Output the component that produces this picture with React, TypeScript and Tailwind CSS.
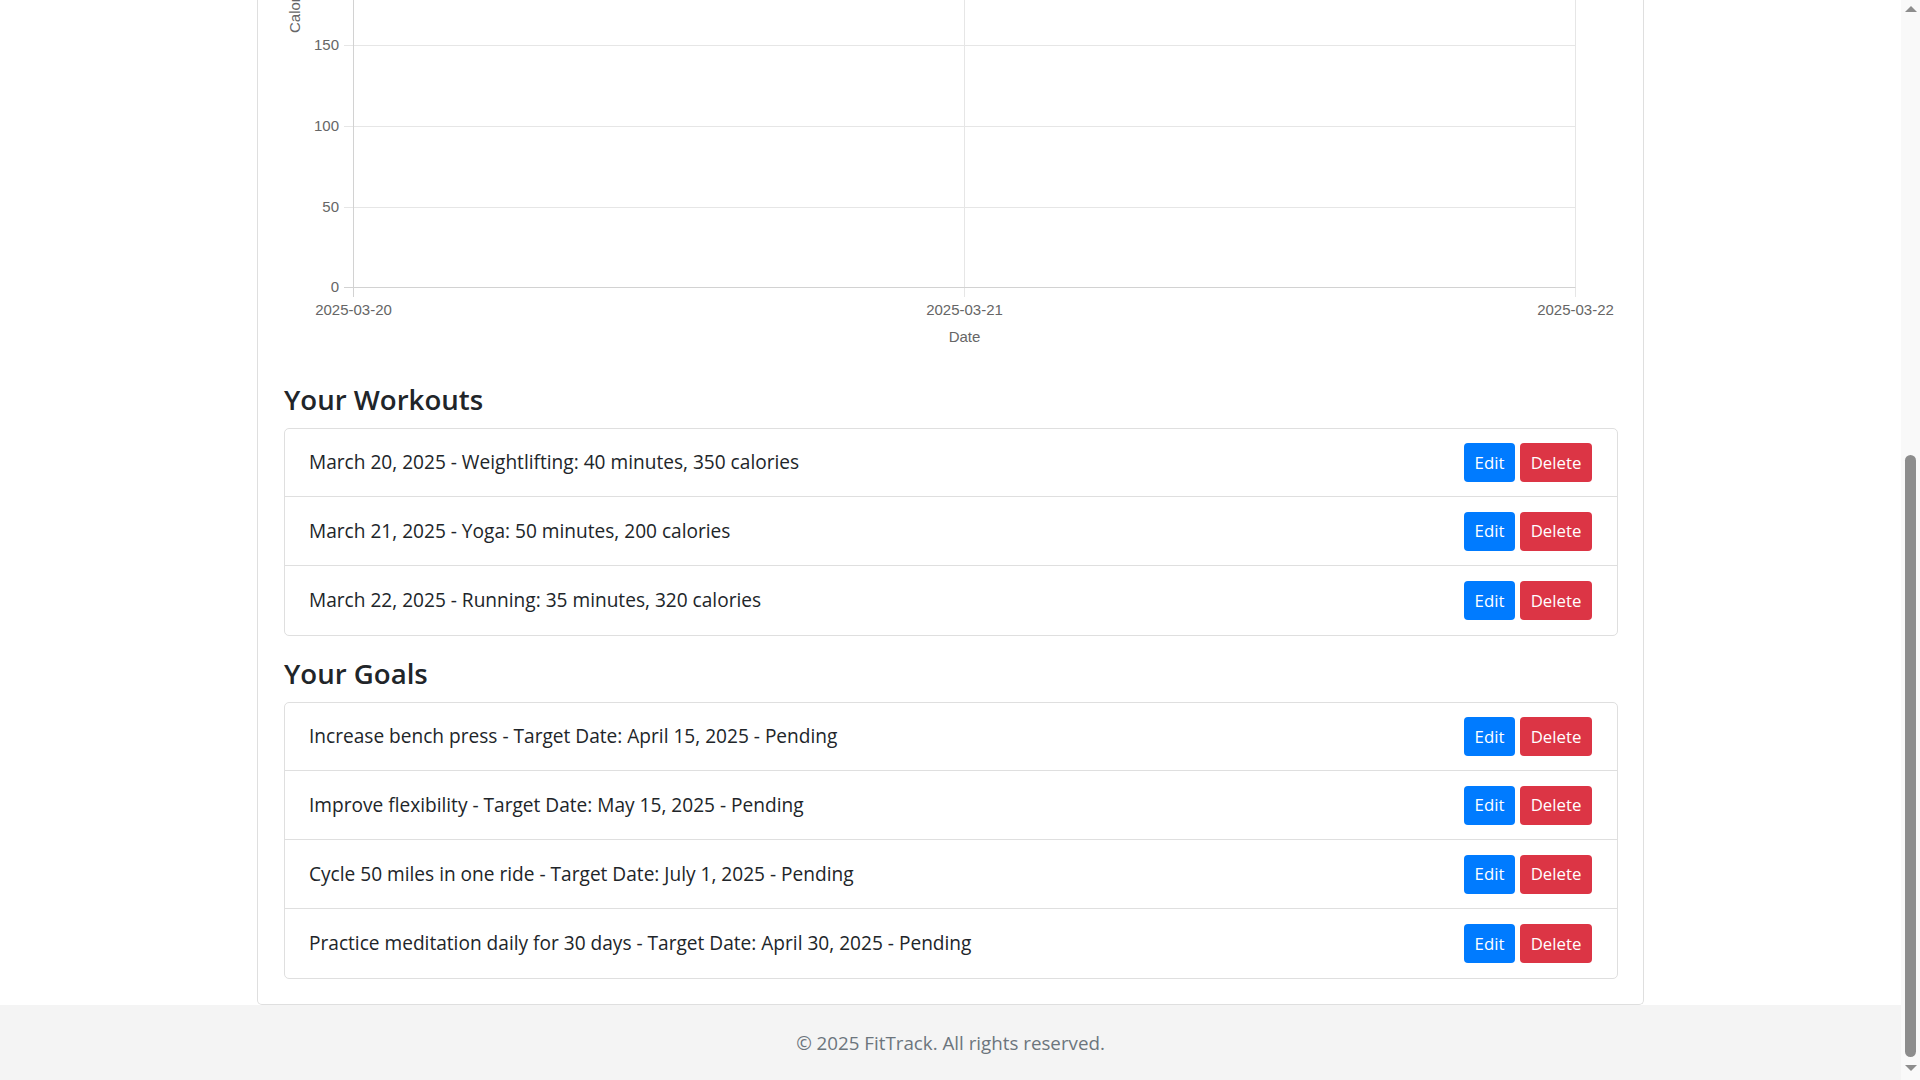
import React from "react";

const workouts = [
  "March 20, 2025 - Weightlifting: 40 minutes, 350 calories",
  "March 21, 2025 - Yoga: 50 minutes, 200 calories",
  "March 22, 2025 - Running: 35 minutes, 320 calories",
];

const goals = [
  "Increase bench press - Target Date: April 15, 2025 - Pending",
  "Improve flexibility - Target Date: May 15, 2025 - Pending",
  "Cycle 50 miles in one ride - Target Date: July 1, 2025 - Pending",
  "Practice meditation daily for 30 days - Target Date: April 30, 2025 - Pending",
];

function Chart() {
  const grid = "#e6e6e6";
  const zero = "#d2d2d2";
  const label = "#666666";
  const yTicks = [
    { v: "150", y: 45.5 },
    { v: "100", y: 126.5 },
    { v: "50", y: 207.5 },
  ];
  const xTicks = [
    { v: "2025-03-20", x: 69.5 },
    { v: "2025-03-21", x: 680.5 },
    { v: "2025-03-22", x: 1291.5 },
  ];
  return (
    <svg
      width="1334"
      height="381"
      viewBox="0 0 1334 381"
      className="block"
      style={{ fontFamily: '"Liberation Sans", Arial, sans-serif' }}
    >
      {yTicks.map((t) => (
        <g key={t.v}>
          <line x1={60} x2={1291.5} y1={t.y} y2={t.y} stroke={grid} strokeWidth={1} />
          <text x={55} y={t.y + 1} textAnchor="end" dominantBaseline="middle" fontSize={15} fill={label}>
            {t.v}
          </text>
        </g>
      ))}
      {xTicks.slice(1).map((t) => (
        <line key={t.v} x1={t.x} x2={t.x} y1={0} y2={297} stroke={grid} strokeWidth={1} />
      ))}
      <line x1={60} x2={1291.5} y1={287.5} y2={287.5} stroke={zero} strokeWidth={1} />
      <line x1={69.5} x2={69.5} y1={0} y2={297} stroke={zero} strokeWidth={1} />
      <text x={55} y={288.5} textAnchor="end" dominantBaseline="middle" fontSize={15} fill={label}>
        0
      </text>
      {xTicks.map((t) => (
        <text key={t.v} x={t.x} y={311} textAnchor="middle" dominantBaseline="middle" fontSize={15} fill={label}>
          {t.v}
        </text>
      ))}
      <text x={680.5} y={338} textAnchor="middle" dominantBaseline="middle" fontSize={15} fill={label}>
        Date
      </text>
      <text
        x={12}
        y={33}
        transform="rotate(-90 12 33)"
        textAnchor="start"
        dominantBaseline="middle"
        fontSize={15}
        fill={label}
      >
        Calories
      </text>
    </svg>
  );
}

function Row({ text }: { text: string }) {
  return (
    <li className="flex h-[69px] items-center justify-between pl-[24px] pr-[25px] first:h-[68px]">
      <span className="text-[19.1px] text-[#212529]">{text}</span>
      <div className="flex gap-[5px]">
        <button className="flex h-[39px] w-[51px] items-center justify-center rounded-[4px] bg-[#007bff] text-[16.8px] text-white">
          Edit
        </button>
        <button className="flex h-[39px] w-[72px] items-center justify-center rounded-[4px] bg-[#dc3545] text-[16.8px] text-white">
          Delete
        </button>
      </div>
    </li>
  );
}

function Scrollbar() {
  return (
    <div className="flex h-full w-[19px] flex-col items-center bg-[#f9f9f9]">
      <svg width="12" height="6" viewBox="0 0 12 6" className="mt-[6px] block">
        <path d="M0 6 L6 0 L12 6 Z" fill="#8d8d8d" />
      </svg>
      <div className="mt-auto h-[602px] w-[11px] rounded-full bg-[#8d8d8d]" />
      <svg width="12" height="6" viewBox="0 0 12 6" className="mb-[9px] mt-[8px] block">
        <path d="M0 0 L12 0 L6 6 Z" fill="#8d8d8d" />
      </svg>
    </div>
  );
}

export default function App() {
  return (
    <div
      className="flex h-[1080px] w-full overflow-hidden bg-white"
      style={{ fontFamily: '"Open Sans", "Noto Sans", sans-serif' }}
    >
      <div className="flex min-w-0 flex-1 flex-col">
        <main className="mx-auto w-[1387px] rounded-b-[5px] border-x border-b border-[#dfdfdf] bg-white pb-[25px] pl-[26px] pr-[25px]">
          <Chart />
          <h4 className="mb-[11px] h-[36px] text-[27.6px] font-semibold leading-[36px] text-[#212529]">
            Your Workouts
          </h4>
          <ul className="mb-[19px] divide-y divide-[#dfdfdf] rounded-[5px] border border-[#dfdfdf]">
            {workouts.map((w) => (
              <Row key={w} text={w} />
            ))}
          </ul>
          <h4 className="mb-[11px] h-[36px] text-[27.6px] font-semibold leading-[36px] text-[#212529]">
            Your Goals
          </h4>
          <ul className="divide-y divide-[#dfdfdf] rounded-[5px] border border-[#dfdfdf]">
            {goals.map((g) => (
              <Row key={g} text={g} />
            ))}
          </ul>
        </main>
        <footer className="flex-1 bg-[#f4f4f4] pt-[23px] text-center text-[18.75px] leading-[30px] text-[#6c757d]">
          © 2025 FitTrack. All rights reserved.
        </footer>
      </div>
      <Scrollbar />
    </div>
  );
}
